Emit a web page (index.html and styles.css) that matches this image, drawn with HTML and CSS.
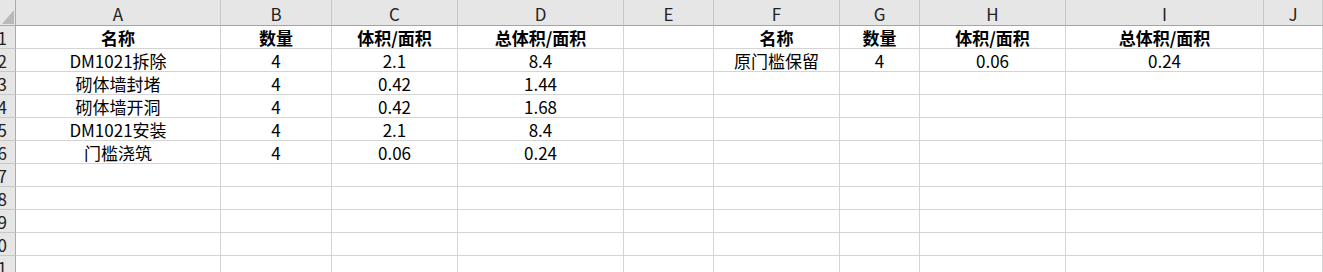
FILE: index.html
```html
<!DOCTYPE html>
<html lang="zh-CN">
<head>
    <meta charset="UTF-8">
    <title>工程量</title>
    <link rel="stylesheet" href="styles.css">
</head>
<body>

    <div class="sheet">
        <!-- column headers -->
        <div class="corner">
            <svg width="14" height="22" viewBox="0 0 14 22"><polygon points="1,21 13,21 13,7" fill="#b9b9b9"/></svg>
        </div>
        <div class="col-head">A</div>
        <div class="col-head">B</div>
        <div class="col-head">C</div>
        <div class="col-head">D</div>
        <div class="col-head">E</div>
        <div class="col-head">F</div>
        <div class="col-head">G</div>
        <div class="col-head">H</div>
        <div class="col-head">I</div>
        <div class="col-head">J</div>

        <div class="row-head"><span>1</span></div>
        <div class="cell bold">名称</div>
        <div class="cell bold">数量</div>
        <div class="cell bold">体积/面积</div>
        <div class="cell bold">总体积/面积</div>
        <div class="cell"></div>
        <div class="cell bold">名称</div>
        <div class="cell bold">数量</div>
        <div class="cell bold">体积/面积</div>
        <div class="cell bold">总体积/面积</div>
        <div class="cell"></div>

        <div class="row-head"><span>2</span></div>
        <div class="cell">DM1021拆除</div>
        <div class="cell">4</div>
        <div class="cell">2.1</div>
        <div class="cell">8.4</div>
        <div class="cell"></div>
        <div class="cell">原门槛保留</div>
        <div class="cell">4</div>
        <div class="cell">0.06</div>
        <div class="cell">0.24</div>
        <div class="cell"></div>

        <div class="row-head"><span>3</span></div>
        <div class="cell">砌体墙封堵</div>
        <div class="cell">4</div>
        <div class="cell">0.42</div>
        <div class="cell">1.44</div>
        <div class="cell"></div><div class="cell"></div><div class="cell"></div><div class="cell"></div><div class="cell"></div><div class="cell"></div>

        <div class="row-head"><span>4</span></div>
        <div class="cell">砌体墙开洞</div>
        <div class="cell">4</div>
        <div class="cell">0.42</div>
        <div class="cell">1.68</div>
        <div class="cell"></div><div class="cell"></div><div class="cell"></div><div class="cell"></div><div class="cell"></div><div class="cell"></div>

        <div class="row-head"><span>5</span></div>
        <div class="cell">DM1021安装</div>
        <div class="cell">4</div>
        <div class="cell">2.1</div>
        <div class="cell">8.4</div>
        <div class="cell"></div><div class="cell"></div><div class="cell"></div><div class="cell"></div><div class="cell"></div><div class="cell"></div>

        <div class="row-head"><span>6</span></div>
        <div class="cell">门槛浇筑</div>
        <div class="cell">4</div>
        <div class="cell">0.06</div>
        <div class="cell">0.24</div>
        <div class="cell"></div><div class="cell"></div><div class="cell"></div><div class="cell"></div><div class="cell"></div><div class="cell"></div>

        <div class="row-head"><span>7</span></div>
        <div class="cell"></div><div class="cell"></div><div class="cell"></div><div class="cell"></div><div class="cell"></div><div class="cell"></div><div class="cell"></div><div class="cell"></div><div class="cell"></div><div class="cell"></div>

        <div class="row-head"><span>8</span></div>
        <div class="cell"></div><div class="cell"></div><div class="cell"></div><div class="cell"></div><div class="cell"></div><div class="cell"></div><div class="cell"></div><div class="cell"></div><div class="cell"></div><div class="cell"></div>

        <div class="row-head"><span>9</span></div>
        <div class="cell"></div><div class="cell"></div><div class="cell"></div><div class="cell"></div><div class="cell"></div><div class="cell"></div><div class="cell"></div><div class="cell"></div><div class="cell"></div><div class="cell"></div>

        <div class="row-head"><span>10</span></div>
        <div class="cell"></div><div class="cell"></div><div class="cell"></div><div class="cell"></div><div class="cell"></div><div class="cell"></div><div class="cell"></div><div class="cell"></div><div class="cell"></div><div class="cell"></div>

        <div class="row-head"><span>11</span></div>
        <div class="cell"></div><div class="cell"></div><div class="cell"></div><div class="cell"></div><div class="cell"></div><div class="cell"></div><div class="cell"></div><div class="cell"></div><div class="cell"></div><div class="cell"></div>
    </div>

</body>
</html>
```

FILE: styles.css
```css
body {
    margin: 0;
    background-color: #fff;
    font-family: "Noto Sans CJK SC", sans-serif;
    font-size: 17px;
    color: #000;
    overflow: hidden;
}

.sheet {
    display: grid;
    grid-template-columns: 16px 205px 111px 126px 166px 90px 126px 80px 146px 198px 1fr;
    grid-template-rows: 26px repeat(11, 23px);
}

.sheet > div {
    box-sizing: border-box;
    display: flex;
    align-items: center;
    justify-content: center;
    white-space: nowrap;
    overflow: hidden;
    line-height: 1;
}

.corner {
    background-color: #e6e6e6;
    border-right: 1px solid #ababab;
    border-bottom: 1px solid #ababab;
}

.corner svg {
    align-self: flex-end;
}

.col-head {
    background-color: #e6e6e6;
    border-right: 1px solid #c8c8c8;
    border-bottom: 1px solid #a4a4a4;
    color: #222;
    padding-top: 2px;
}

.row-head {
    background-color: #e6e6e6;
    border-right: 1px solid #ababab;
    border-bottom: 1px solid #c8c8c8;
    color: #222;
    justify-content: flex-end !important;
    padding-right: 8px;
}

.cell {
    border-right: 1px solid #d4d4d4;
    border-bottom: 1px solid #d4d4d4;
}

.bold {
    font-weight: 700;
}
```
